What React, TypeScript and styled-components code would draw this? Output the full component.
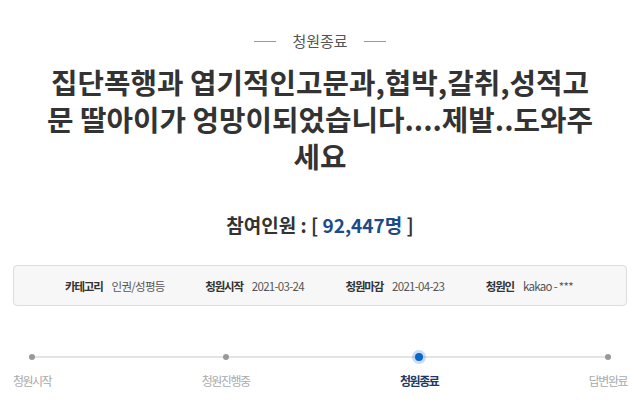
import styled, { createGlobalStyle } from "styled-components";

const GlobalStyle = createGlobalStyle`
  html, body {
    margin: 0;
    padding: 0;
    background: #fff;
  }
  body {
    font-family: "Noto Sans CJK KR", "Noto Sans", sans-serif;
    color: #333;
  }
`;

const titleLines = [
  "집단폭행과 엽기적인고문과,협박,갈취,성적고",
  "문 딸아이가 엉망이되었습니다....제발..도와주",
  "세요",
];

const steps = [
  { label: "청원시작", active: false },
  { label: "청원진행중", active: false },
  { label: "청원종료", active: true },
  { label: "답변완료", active: false },
];

const infos = [
  { label: "카테고리", value: "인권/성평등" },
  { label: "청원시작", value: "2021-03-24" },
  { label: "청원마감", value: "2021-04-23" },
  { label: "청원인", value: "kakao - ***" },
];

export default function App() {
  return (
    <>
      <GlobalStyle />
      <PetitionView>
        <StatusHeader>
          <Rule />
          <span>청원종료</span>
          <Rule />
        </StatusHeader>

        <Title>
          {titleLines.map((line) => (
            <TitleLine key={line}>{line}</TitleLine>
          ))}
        </Title>

        <Count>
          참여인원 : [ <CountNum>92,447명</CountNum> ]
        </Count>

        <InfoBox>
          {infos.map((info) => (
            <InfoItem key={info.label}>
              <InfoLabel>{info.label}</InfoLabel>
              <InfoValue>{info.value}</InfoValue>
            </InfoItem>
          ))}
        </InfoBox>

        <Steps>
          {steps.map((step) => (
            <Step key={step.label}>
              <Dot $active={step.active} />
              <StepLabel $active={step.active}>{step.label}</StepLabel>
            </Step>
          ))}
        </Steps>
      </PetitionView>
    </>
  );
}

const PetitionView = styled.main`
  display: flex;
  flex-direction: column;
  align-items: center;
  width: 640px;
  height: 416px;
  padding: 30px 13px 0 13px;
  box-sizing: border-box;
  overflow: hidden;
`;

const StatusHeader = styled.div`
  display: flex;
  align-items: center;
  gap: 16px;
  font-size: 15px;
  line-height: 22px;
  color: #555;
`;

const Rule = styled.i`
  display: block;
  width: 22px;
  height: 1px;
  background: #999;
`;

const Title = styled.h1`
  display: flex;
  flex-direction: column;
  align-items: center;
  margin: 11px 0 0;
  font-size: 28.8px;
  font-weight: 700;
  color: #333;
`;

const TitleLine = styled.span`
  display: block;
  height: 37px;
  line-height: 37px;
  white-space: nowrap;
`;

const Count = styled.div`
  margin-top: 38px;
  font-size: 19px;
  line-height: 26px;
  font-weight: 700;
  color: #333;
`;

const CountNum = styled.span`
  color: #1d4a8a;
`;

const InfoBox = styled.section`
  display: flex;
  align-items: center;
  align-self: stretch;
  height: 41px;
  margin-top: 27px;
  padding-left: 51px;
  box-sizing: border-box;
  background: #f7f7f7;
  border: 1px solid #ddd;
  border-radius: 4px;
`;

const InfoItem = styled.div`
  display: flex;
  align-items: baseline;
  gap: 9px;
  width: 141px;
  font-size: 11.5px;
`;

const InfoLabel = styled.strong`
  font-weight: 700;
  color: #333;
  letter-spacing: -1.2px;
`;

const InfoValue = styled.span`
  color: #555;
  letter-spacing: -0.7px;
`;

const Steps = styled.ol`
  position: relative;
  display: flex;
  justify-content: space-between;
  align-self: stretch;
  margin: 44px 0 0;
  padding: 0;
  list-style: none;

  &::before {
    content: "";
    position: absolute;
    left: 20px;
    right: 20px;
    top: 6px;
    height: 2px;
    background: #e3e3e3;
  }
`;

const Step = styled.li`
  position: relative;
  display: flex;
  flex-direction: column;
  align-items: center;
`;

const Dot = styled.span<{ $active: boolean }>`
  display: block;
  width: ${(p) => (p.$active ? "8px" : "6px")};
  height: ${(p) => (p.$active ? "8px" : "6px")};
  margin: ${(p) => (p.$active ? "3px 0" : "4px 0")};
  border-radius: 50%;
  background: ${(p) => (p.$active ? "#0a66c8" : "#999")};
  box-shadow: ${(p) => (p.$active ? "0 0 0 3px rgba(10, 102, 200, 0.22)" : "none")};
`;

const StepLabel = styled.span<{ $active: boolean }>`
  margin-top: 8px;
  font-size: 12px;
  line-height: 18px;
  letter-spacing: -1.5px;
  font-weight: ${(p) => (p.$active ? 700 : 400)};
  color: ${(p) => (p.$active ? "#1d3a66" : "#aaa")};
`;
